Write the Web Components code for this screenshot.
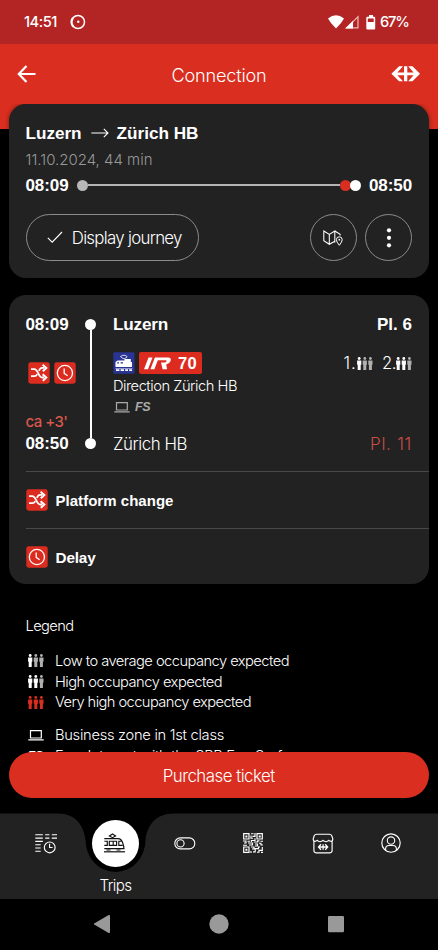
<!DOCTYPE html>
<html lang="en">
<head>
<meta charset="utf-8">
<title>Connection</title>
<style>
html,body{margin:0;height:100%;background:#000;overflow:hidden}
</style>
</head>
<body>
<trip-app></trip-app>
<script>
const ICONS={
 ring:[16,16,'<circle cx="8" cy="8" r="6.5" fill="none" stroke="#fff" stroke-width="1.5"/><path d="M3 4A6.5 6.5 0 0 0 3.4 12.6" fill="none" stroke="#fff" stroke-width="2.2"/><circle cx="8.3" cy="7.8" r="1.2" fill="#fff"/>'],
 wifi:[16,14,'<path d="M0 3.6Q8-3 16 3.6Q13.5 8.5 8 13.4Q2.5 8.5 0 3.6Z" fill="#fff"/>'],
 signal:[14,14,'<path d="M13 1.7V12.8H2Z" fill="none" stroke="#eeb9b5" stroke-width="1.2"/><path d="M0 13.4 8 5.7V13.4Z" fill="#fff"/>'],
 battery:[10,15,'<path d="M1 1.7H3V0H7V1.7H8.2Q9.2 1.7 9.2 2.7V13.4Q9.2 14.4 8.2 14.4H1.3Q.3 14.4.3 13.4V2.7Q.3 1.7 1.3 1.7Z" fill="#fff"/><path d="M1.8 3.5H7.7V7H1.8Z" fill="#b32424"/>'],
 back:[20,18,'<path d="M18.5 9H2M9.5 1 1.8 9l7.7 8" fill="none" stroke="#fff" stroke-width="2.2"/>'],
 sbb:[30,16,'<path d="M8.1.3H12L6.4 6.5H13V.3H16.3V6.5H22.6L17.2.3H21.5L29 7.8 21.5 15.2H17.2L22.6 9.2H16.3V15.2H13V9.2H6.4L12 15.2H8.1L.4 7.8Z" fill="#fff"/>'],
 arrow:[18,10,'<path d="M.3 5H16.7M12.8.8 17 5l-4.2 4.2" fill="none" stroke="#fff" stroke-width="1.1"/>'],
 check:[16,13,'<path d="M.8 6.8 5.2 11.2 15 1" fill="none" stroke="#fff" stroke-width="1.1"/>'],
 map:[20,16,'<path d="M11.8 12.4 11.8 1 6.3 4.5 .8 1V10.8L6.3 14.3 11.8 11.3M6.3 4.5V14.3M11.8 1 17.1 4.4V5.6" fill="none" stroke="#fff" stroke-width="1.05"/><path d="M16.3 15.3Q13.4 11.8 13.4 9.7A2.9 2.9 0 0 1 19.2 9.7Q19.2 11.8 16.3 15.3Z" fill="none" stroke="#fff" stroke-width="1"/><circle cx="16.3" cy="9.7" r=".9" fill="#fff"/>'],
 dots:[6,20,'<circle cx="3" cy="2.3" r="2.1" fill="#fff"/><circle cx="3" cy="9.8" r="2.1" fill="#fff"/><circle cx="3" cy="17.3" r="2.1" fill="#fff"/>'],
 shuffle:[22,22,'<rect x=".3" y=".3" width="21.4" height="21.4" rx="2.4" fill="#dc2c20"/><path d="M3 7.2H6.3C10.2 7.2 10.3 15.5 14.2 15.5H16.2M3 14.2H6.5C8 14.2 8.6 13.3 9.2 12.2M10.9 8.8C11.6 7.2 12.5 5.9 14.2 5.9H16.2" fill="none" stroke="#fff" stroke-width="1.8"/><path d="M14.6 2.7 18.3 6 14.8 9.3M14.6 12.3 18.3 15.6 14.8 18.8" fill="none" stroke="#fff" stroke-width="2"/>'],
 clock:[22,22,'<rect x=".3" y=".3" width="21.4" height="21.4" rx="2.4" fill="#dc2c20"/><circle cx="10.9" cy="11" r="7.6" fill="none" stroke="#fff" stroke-width="1.3"/><path d="M10.2 6.4V11.3L13.6 13.8" fill="none" stroke="#fff" stroke-width="1.3"/>'],
 loco:[22,22,'<rect x=".3" y=".3" width="21.2" height="21.4" rx="1" fill="#293493"/><path d="M2.5 13.5V10L4.6 8.6H11.5V7H17.8V10H19V15H2.5Z" fill="#fff"/><path d="M7.5 4.6 9.5 3.4H12.5L14.2 4.8 11.8 6.6H10Z" fill="none" stroke="#fff" stroke-width=".8"/><path d="M4.2 10.9H6M7.6 10.9H10" stroke="#293493" stroke-width="1.2"/><path d="M2.4 16.5H19.4" stroke="#aab1dd" stroke-width=".8"/><path d="M3 18.2H6.4M7.6 18.2H11M12.2 18.2H15M16.2 18.2H19" stroke="#fff" stroke-width="1.8"/>'],
 ir:[28,13,'<path d="M4.5.5H8.5L4 12.3H0ZM10.9.5H24Q27.8.9 26.6 4.1 25.4 7 22.2 7.6L23.1 12.3H18.6L17 5.4H20.9Q22.2 5.2 22.6 4.3 22.8 3.3 21.6 3.3H13.8L10.4 12.3H6.4Z" fill="#fff"/>'],
 laptop:[16,11,'<path d="M2.5.7H13.3V8H2.5ZM.3 9.8H15.7" fill="none" stroke="currentColor" stroke-width="1.2"/>'],
 timetable:[23,21,'<path d="M.3 1.8H7.8M10.2 1.8H14.4M16.8 1.8H22M.3 5.1H7.8M10.2 5.1H14.4M16.8 5.1H22M.3 8.4H7.8M.3 11.7H5.7M.3 15H5.7M.3 18.3H5.7" stroke="#fff" stroke-width="1.1"/><circle cx="14.7" cy="14.4" r="5.4" fill="none" stroke="#fff" stroke-width="1.15"/><path d="M14.6 10.8V14.5H17.6" fill="none" stroke="#fff" stroke-width="1.1"/>'],
 tram:[22,21,'<path d="M.3 5.6H14Q17.2 5.6 18.6 9.5Q19.8 13 20 15.6H.3M.3 8.2H3.3V12.3H.3M5.3 8.2H9.2V12.3H5.3ZM9.2 8.2H12.6V12.3H9.2M18.6 12.3H14.8V8.2H17.6M8.5.9 11.6 2.9 8.5 4.7 5.4 2.9Z" fill="none" stroke="#111" stroke-width="1.15"/><path d="M0 18.8H21" stroke="#111" stroke-width="1.2"/><path d="M2.5 17H6.5M12.5 17H16.5" stroke="#111" stroke-width="1.2"/>'],
 toggle:[22,13,'<rect x=".8" y=".9" width="20" height="11" rx="5.5" fill="none" stroke="#fff" stroke-width="1.1"/><circle cx="6.5" cy="6.4" r="3.6" fill="none" stroke="#fff" stroke-width="1.1"/>'],
 qr:[20,20,'<path d="M.7.7H6V6H.7ZM14 .7H19.3V6H14ZM.7 14H6V19.3H.7Z" fill="none" stroke="#fff" stroke-width="1.2"/><path d="M2.4 2.4H4.4V4.4H2.4ZM15.7 2.4H17.7V4.4H15.7ZM2.4 15.7H4.4V17.7H2.4Z" fill="#fff"/><path d="M8 .7H10.5M12 0V3.3H9.4M8 2.4V5.2H10M12 5.3V7.5H8.4V9M0 8H3V10H1M4.5 8.2H7M5 10H9.5V12H6M0 12.2H4M10.8 9H14.6V7.9H16.5M17.5 8.2H20M16 10.2H18V12H20M12 11H14.5V13H12M8 14H11V16H9M8 18V20M10 18.8H12.2V15.6H15.5V14H17M14 19.2H16V17.3H19.3V14M18 19.3H20" fill="none" stroke="#fff" stroke-width="1.15"/>'],
 shop:[22,21,'<path d="M4.6 1.2H17.4Q19 1.2 19.8 2.8L20.8 5.8Q20.8 8.3 19.2 8.3 17.6 8.3 16.8 7.4 15.5 8.7 14 8.7 12.3 8.7 11 7.4 9.7 8.7 8 8.7 6.4 8.7 5.2 7.4 4.2 8.3 2.8 8.3 1.2 8.3 1.2 5.8L2.2 2.8Q3 1.2 4.6 1.2ZM1.9 8.3V17.6Q1.9 19.8 4.1 19.8H17.9Q20.1 19.8 20.1 17.6V8.3" fill="none" stroke="#fff" stroke-width="1.15"/><path d="M9 11.2 6.5 14 9 16.8M13.2 11.2 15.7 14 13.2 16.8M7 14H15.2M11.1 11.2V16.8" fill="none" stroke="#fff" stroke-width="1.3"/>'],
 user:[20,20,'<circle cx="10" cy="10" r="9.2" fill="none" stroke="#fff" stroke-width="1.15"/><circle cx="10" cy="7.6" r="3.7" fill="none" stroke="#fff" stroke-width="1.1"/><path d="M4.6 17.3V16Q4.6 12.5 8 12.5H12Q15.4 12.5 15.4 16V17.3" fill="none" stroke="#fff" stroke-width="1.1"/>'],
 navback:[18,20,'<path d="M15.2 1.3Q17 .4 17 2V18Q17 19.6 15.2 18.7L1.2 10.6Q.4 10 1.2 9.4Z" fill="#999"/>'],
 navhome:[20,20,'<circle cx="10" cy="10" r="9.7" fill="#999"/>'],
 navrecent:[18,18,'<rect x="1" y="1" width="16" height="16.2" rx="1.2" fill="#999"/>']
};
const define=(name,html,setup)=>customElements.define(name,class extends HTMLElement{
 connectedCallback(){
  if(this.shadowRoot)return;
  this.attachShadow({mode:'open'}).innerHTML=typeof html==='function'?html(this):html;
  if(setup)setup(this);
 }
});

define('ui-icon',el=>{
 const [w,h,body]=ICONS[el.getAttribute('name')];
 return `<style>:host{display:block;flex:none;width:${w}px;height:${h}px}svg{display:block}</style><svg width="${w}" height="${h}" viewBox="0 0 ${w} ${h}">${body}</svg>`;
});

/* Three figures; level sets how many are highlighted. */
define('occupancy-icon',el=>{
 const n=+el.getAttribute('level'),on=n===3?'#d92e20':'#fff';
 const p=[0,1,2].map(i=>`<g transform="translate(${i*5.6} 0)" fill="${i<n?on:'#b0b0b0'}"><circle cx="2.2" cy="1.5" r="1.4"/><path d="M.1 3.4H4.3V7.8H3.7V13H.7V7.8H.1Z"/></g>`).join('');
 return `<style>:host{display:block;flex:none;width:16px;height:13px}svg{display:block}</style><svg width="16" height="13" viewBox="0 0 16 13">${p}</svg>`;
});

define('status-bar',`<style>:host{display:flex;box-sizing:border-box;height:44px;padding:0 29.5px 0 24px;align-items:center;background:#b32424;flex:none}
.sp{flex:1}</style>
<ui-text size="15" weight="500" w="33">14:51</ui-text><ui-icon name="ring" style="margin-left:13px"></ui-icon><span class="sp"></span>
<ui-icon name="wifi"></ui-icon><ui-icon name="signal" style="margin-left:1.5px"></ui-icon><ui-icon name="battery" style="margin:0 4px 0 7px"></ui-icon><ui-text size="15" weight="500" w="28.5">67%</ui-text>`);

define('app-header',`<style>:host{display:grid;grid-template-columns:60px 1fr 60px;box-sizing:border-box;height:85px;padding:1px 17px 26px;align-items:center;background:#d92e20;flex:none}
.t{text-align:center;padding-top:2px}.r{justify-self:end}</style>
<ui-icon name="back"></ui-icon><div class="t"><ui-text size="18.5" w="95"><slot></slot></ui-text></div><ui-icon class="r" name="sbb"></ui-icon>`);

define('ui-card',`<style>:host{display:block;box-sizing:border-box;margin:0 9px 0 8.5px;background:#222;border-radius:17px;position:relative}</style><slot></slot>`);

define('pill-button',`<style>:host{display:flex;box-sizing:border-box;height:47px;min-width:47px;border:1px solid #8b8b8b;border-radius:24px;align-items:center;justify-content:center}</style><slot></slot>`);

define('trip-summary',`<style>:host{display:flex;flex-direction:column;box-sizing:border-box;height:174px;padding:18px 17px 0}
.row{display:flex;align-items:center}.track{flex:1;display:flex;align-items:center;margin:-2px 8.5px 0 8.5px;height:10px}
.track i{width:11px;height:11px;border-radius:50%;flex:none}.track b{flex:1;height:2px;background:#b3b6b3}</style>
<div class="row" style="height:22px"><ui-text bold size="17.2" w="56">Luzern</ui-text><ui-icon name="arrow" style="margin:0 8px 0 9px"></ui-icon><ui-text bold size="17.2" w="82">Zürich HB</ui-text></div>
<div class="row" style="height:20px;margin-top:6px"><ui-text size="15.3" w="127" color="#989898">11.10.2024, 44 min</ui-text></div>
<div class="row" style="height:22px;margin-top:5px"><ui-text bold size="17" w="43">08:09</ui-text><div class="track"><i style="background:#b7b7b7"></i><b></b><i style="background:#d92e20"></i><i style="background:#fff;margin-left:-1.5px"></i></div><ui-text bold size="17" w="43">08:50</ui-text></div>
<div class="row" style="margin-top:17px;gap:8.5px"><pill-button style="width:173.5px"><ui-icon name="check" style="margin:0 9px 0 4px"></ui-icon><ui-text size="17.2" w="110">Display journey</ui-text></pill-button><span style="flex:1"></span><pill-button style="width:47px"><ui-icon name="map"></ui-icon></pill-button><pill-button style="width:47px"><ui-icon name="dots"></ui-icon></pill-button></div>`);

define('journey-leg',`<style>:host{display:grid;grid-template-columns:59px 12px 1fr;box-sizing:border-box;height:176px;padding:18.5px 17px 0}
.col{display:flex;flex-direction:column;align-items:flex-start}.row{display:flex;align-items:center;height:22px;width:100%}
.line{height:130px;margin-top:5.5px;display:flex;flex-direction:column;align-items:center}.line i{width:11px;height:11px;border-radius:50%;background:#fff}.line b{flex:1;width:2px;background:#fff}
.main{padding-left:16.5px}.sp{flex:1}
.product{display:flex;align-items:center;justify-content:center;gap:6px;width:63px;height:21.5px;background:#dc2c20;border-radius:2px;margin-left:4px}</style>
<div class="col"><div class="row"><ui-text bold size="17" w="43">08:09</ui-text></div>
<div class="row" style="margin:26.5px 0 0 2px;gap:4px"><ui-icon name="shuffle"></ui-icon><ui-icon name="clock"></ui-icon></div>
<div class="row" style="margin-top:26.5px"><ui-text size="15.3" weight="500" w="42" color="#d8574d">ca +3'</ui-text></div>
<div class="row"><ui-text bold size="17" w="43">08:50</ui-text></div></div>
<div class="line"><i></i><b></b><i></i></div>
<div class="col main"><div class="row"><ui-text bold size="17.2" w="55" style="margin-top:-1px">Luzern</ui-text><span class="sp"></span><ui-text bold size="17" w="35">Pl. 6</ui-text></div>
<div class="row" style="margin-top:16.5px"><ui-icon name="loco"></ui-icon><div class="product"><ui-icon name="ir"></ui-icon><ui-text bold size="16.5" w="19">70</ui-text></div><span class="sp"></span><ui-text size="17" w="13">1.</ui-text><occupancy-icon level="1"></occupancy-icon><ui-text size="17" w="14" style="margin-left:9.5px">2.</ui-text><occupancy-icon level="2"></occupancy-icon></div>
<div class="row" style="margin-top:1px"><ui-text size="15" w="124">Direction Zürich HB</ui-text></div>
<div class="row" style="height:20px;color:#aaa"><ui-icon name="laptop" style="margin:0 5px 0 1px"></ui-icon><ui-text bold italic size="12.5" w="15" color="#aaa">FS</ui-text></div>
<div class="row" style="margin-top:15.5px"><ui-text size="17.2" w="74">Zürich HB</ui-text><span class="sp"></span><ui-text size="17.4" w="42" color="#c64e46">Pl. 11</ui-text></div></div>`);

define('notice-row',el=>`<style>:host{display:flex;box-sizing:border-box;height:56.5px;margin-left:17px;border-top:1px solid #494949;align-items:center;gap:8px;padding-top:1px}::slotted(*){margin-top:1.5px}</style><ui-icon name="${el.getAttribute('icon')}"></ui-icon><slot></slot>`);

define('legend-row',`<style>:host{display:grid;grid-template-columns:29.5px 1fr;align-items:center;height:20.8px;color:#fff}::slotted([slot=icon]){margin-left:2px}</style><slot name="icon"></slot><slot></slot>`);

define('tab-bar',`<style>:host{display:block;height:86px;flex:none;position:relative}
.bg{position:absolute;inset:0}
.tabs{position:relative;display:grid;grid-template-columns:repeat(6,69px);padding-left:12px;height:86px}
.tab{display:flex;flex-direction:column;align-items:center}.slot{height:60px;display:flex;align-items:center;justify-content:center}
.active{width:47px;height:47px;border-radius:50%;background:#fff;display:flex;align-items:center;justify-content:center}</style>
<svg class="bg" width="438" height="86" viewBox="0 0 438 86"><path d="M0 .5H58C76 .5 84 13 85.5 27A30 32 0 0 0 145.5 27C147 13 155 .5 174 .5H438V86H0Z" fill="#222"/></svg>
<div class="tabs"><div class="tab"><div class="slot"><ui-icon name="timetable"></ui-icon></div></div>
<div class="tab"><div class="slot"><div class="active" style="margin-right:1px"><ui-icon name="tram"></ui-icon></div></div><ui-text size="15.5" w="32" style="margin-top:3px">Trips</ui-text></div>
<div class="tab"><div class="slot"><ui-icon name="toggle"></ui-icon></div></div><div class="tab"><div class="slot" style="margin-right:1px"><ui-icon name="qr"></ui-icon></div></div><div class="tab"><div class="slot"><ui-icon name="shop"></ui-icon></div></div><div class="tab"><div class="slot" style="margin-right:1px"><ui-icon name="user"></ui-icon></div></div></div>`);

define('system-nav',`<style>:host{display:grid;grid-template-columns:repeat(3,117px);justify-content:center;justify-items:center;align-items:center;height:50px;flex:none;background:#000}</style>
<ui-icon name="navback"></ui-icon><ui-icon name="navhome"></ui-icon><ui-icon name="navrecent"></ui-icon>`);

define('trip-app',`<style>:host{display:flex;flex-direction:column;width:438px;height:950px;background:#000;overflow:hidden}
.content{height:709px;flex:none;overflow:hidden;position:relative;margin-top:-25px}
.shade{box-shadow:0 0 4px rgba(0,0,0,.45)}
.legend{padding:31px 25.5px 0;display:flex;flex-direction:column;height:200px}
.legend-title{height:34.5px;line-height:0;padding-top:1px}
.buy{position:absolute;left:8.5px;right:9px;top:648px;height:46px;border-radius:23px;background:#d92e20;display:flex;align-items:center;justify-content:center}</style>
<status-bar></status-bar><app-header>Connection</app-header>
<div class="content">
<ui-card class="shade"><trip-summary></trip-summary></ui-card>
<ui-card style="margin-top:17px;height:289px"><journey-leg></journey-leg>
<notice-row icon="shuffle"><ui-text bold size="15" w="118">Platform change</ui-text></notice-row>
<notice-row icon="clock"><ui-text bold size="15.3" w="40">Delay</ui-text></notice-row></ui-card>
<div class="legend"><div class="legend-title"><ui-text size="15" w="48">Legend</ui-text></div>
<legend-row><occupancy-icon slot="icon" level="1"></occupancy-icon><ui-text size="15" w="234">Low to average occupancy expected</ui-text></legend-row>
<legend-row><occupancy-icon slot="icon" level="2"></occupancy-icon><ui-text size="15" w="167">High occupancy expected</ui-text></legend-row>
<legend-row><occupancy-icon slot="icon" level="3"></occupancy-icon><ui-text size="15" w="196">Very high occupancy expected</ui-text></legend-row>
<legend-row style="margin-top:12px"><ui-icon slot="icon" name="laptop"></ui-icon><ui-text size="15" w="169">Business zone in 1st class</ui-text></legend-row>
<legend-row><ui-text slot="icon" bold italic size="12.5" w="15">FS</ui-text><ui-text size="15" w="227">Free Internet with the SBB FreeSurf</ui-text></legend-row></div>
<div class="buy"><ui-text size="17.2" w="112" style="margin-top:2px">Purchase ticket</ui-text></div></div>
<tab-bar></tab-bar><system-nav></system-nav>`);

/* Single-line label; w sets its advance width through letter-spacing. */
define('ui-text',el=>{
 const a=n=>el.getAttribute(n),bold=el.hasAttribute('bold');
 return `<style>:host{display:inline-block;justify-self:start;flex:none;white-space:nowrap;line-height:20px;font-family:${bold?'"Liberation Sans",Arial':'Inter,"Liberation Sans"'},sans-serif;font-weight:${bold?700:a('weight')||300};font-size:${a('size')*(bold?1:.98)}px;font-style:${el.hasAttribute('italic')?'italic':'normal'};color:${a('color')||'#fff'}}</style><slot></slot>`;
},el=>{
 const target=+el.getAttribute('w');
 const slot=el.shadowRoot.querySelector('slot');
 const text=slot.assignedNodes({flatten:true}).map(n=>n.textContent).join('');
 if(!target||!text)return;
 const natural=el.getBoundingClientRect().width;
 el.style.letterSpacing=((target-natural)/text.length).toFixed(3)+'px';
});
</script>
</body>
</html>
